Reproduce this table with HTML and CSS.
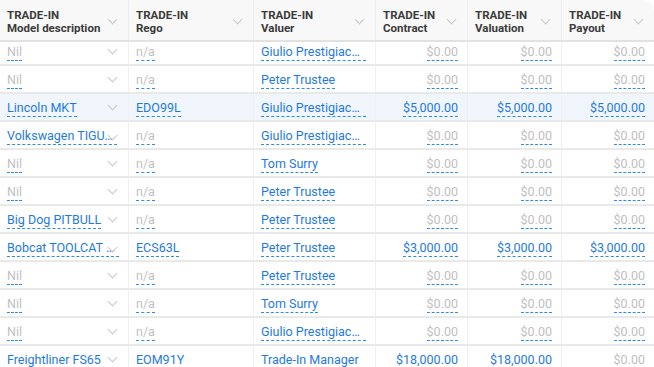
FILE: index.html
```html
<!DOCTYPE html>
<html>
<head>
<meta charset="utf-8">
<link rel="stylesheet" href="styles.css">
</head>
<body>
<div class="table">
  <div class="row head">
    <div class="th"><div class="tt"><span>TRADE-IN</span><span>Model description</span></div><i class="chev"></i></div>
    <div class="th"><div class="tt"><span>TRADE-IN</span><span>Rego</span></div><i class="chev"></i></div>
    <div class="th"><div class="tt"><span>TRADE-IN</span><span>Valuer</span></div><i class="chev"></i></div>
    <div class="th"><div class="tt"><span>TRADE-IN</span><span>Contract</span></div><i class="chev"></i></div>
    <div class="th"><div class="tt"><span>TRADE-IN</span><span>Valuation</span></div><i class="chev"></i></div>
    <div class="th"><div class="tt"><span>TRADE-IN</span><span>Payout</span></div><i class="chev"></i></div>
  </div>
  <div class="viewport">
    <div class="rows">
      <div class="row"><div class="td"><span class="l muted">Nil</span><i class="chev"></i></div><div class="td"><span class="l muted">n/a</span></div><div class="td"><span class="l trunc">Giulio Prestigiacomo</span></div><div class="td num"><span class="l muted">$0.00</span></div><div class="td num"><span class="l muted">$0.00</span></div><div class="td num"><span class="l muted">$0.00</span></div></div>
      <div class="row"><div class="td"><span class="l muted">Nil</span><i class="chev"></i></div><div class="td"><span class="l muted">n/a</span></div><div class="td"><span class="l">Peter Trustee</span></div><div class="td num"><span class="l muted">$0.00</span></div><div class="td num"><span class="l muted">$0.00</span></div><div class="td num"><span class="l muted">$0.00</span></div></div>
      <div class="row sel"><div class="td"><span class="l">Lincoln MKT</span><i class="chev"></i></div><div class="td"><span class="l">EDO99L</span></div><div class="td"><span class="l trunc">Giulio Prestigiacomo</span></div><div class="td num"><span class="l">$5,000.00</span></div><div class="td num"><span class="l">$5,000.00</span></div><div class="td num"><span class="l">$5,000.00</span></div></div>
      <div class="row"><div class="td"><span class="l trunc1">Volkswagen TIGUAN</span><i class="chev over"></i></div><div class="td"><span class="l muted">n/a</span></div><div class="td"><span class="l trunc">Giulio Prestigiacomo</span></div><div class="td num"><span class="l muted">$0.00</span></div><div class="td num"><span class="l muted">$0.00</span></div><div class="td num"><span class="l muted">$0.00</span></div></div>
      <div class="row"><div class="td"><span class="l muted">Nil</span><i class="chev"></i></div><div class="td"><span class="l muted">n/a</span></div><div class="td"><span class="l">Tom Surry</span></div><div class="td num"><span class="l muted">$0.00</span></div><div class="td num"><span class="l muted">$0.00</span></div><div class="td num"><span class="l muted">$0.00</span></div></div>
      <div class="row"><div class="td"><span class="l muted">Nil</span><i class="chev"></i></div><div class="td"><span class="l muted">n/a</span></div><div class="td"><span class="l">Peter Trustee</span></div><div class="td num"><span class="l muted">$0.00</span></div><div class="td num"><span class="l muted">$0.00</span></div><div class="td num"><span class="l muted">$0.00</span></div></div>
      <div class="row"><div class="td"><span class="l">Big Dog PITBULL</span><i class="chev"></i></div><div class="td"><span class="l muted">n/a</span></div><div class="td"><span class="l">Peter Trustee</span></div><div class="td num"><span class="l muted">$0.00</span></div><div class="td num"><span class="l muted">$0.00</span></div><div class="td num"><span class="l muted">$0.00</span></div></div>
      <div class="row"><div class="td"><span class="l trunc2"><span class="cut">Bobcat TOOLCAT 5600</span></span><i class="chev over"></i></div><div class="td"><span class="l">ECS63L</span></div><div class="td"><span class="l">Peter Trustee</span></div><div class="td num"><span class="l">$3,000.00</span></div><div class="td num"><span class="l">$3,000.00</span></div><div class="td num"><span class="l">$3,000.00</span></div></div>
      <div class="row"><div class="td"><span class="l muted">Nil</span><i class="chev"></i></div><div class="td"><span class="l muted">n/a</span></div><div class="td"><span class="l">Peter Trustee</span></div><div class="td num"><span class="l muted">$0.00</span></div><div class="td num"><span class="l muted">$0.00</span></div><div class="td num"><span class="l muted">$0.00</span></div></div>
      <div class="row"><div class="td"><span class="l muted">Nil</span><i class="chev"></i></div><div class="td"><span class="l muted">n/a</span></div><div class="td"><span class="l">Tom Surry</span></div><div class="td num"><span class="l muted">$0.00</span></div><div class="td num"><span class="l muted">$0.00</span></div><div class="td num"><span class="l muted">$0.00</span></div></div>
      <div class="row"><div class="td"><span class="l muted">Nil</span><i class="chev"></i></div><div class="td"><span class="l muted">n/a</span></div><div class="td"><span class="l trunc">Giulio Prestigiacomo</span></div><div class="td num"><span class="l muted">$0.00</span></div><div class="td num"><span class="l muted">$0.00</span></div><div class="td num"><span class="l muted">$0.00</span></div></div>
      <div class="row"><div class="td"><span class="l">Freightliner FS65</span><i class="chev"></i></div><div class="td"><span class="l">EOM91Y</span></div><div class="td"><span class="l">Trade-In Manager</span></div><div class="td num"><span class="l">$18,000.00</span></div><div class="td num"><span class="l">$18,000.00</span></div><div class="td num"><span class="l muted">$0.00</span></div></div>
    </div>
  </div>
</div>
</body>
</html>
```
FILE: styles.css
```css
html, body {
  margin: 0;
  padding: 0;
  background: #ffffff;
}
body {
  width: 654px;
  height: 367px;
  overflow: hidden;
  font-family: Roboto, "Noto Sans", Arial, sans-serif;
}
.table {
  width: 654px;
  height: 367px;
  display: flex;
  flex-direction: column;
  border-top-right-radius: 12px;
  overflow: hidden;
}
.row {
  display: grid;
  grid-template-columns: 128px 125px 122px 92px 94px 93px;
  height: 28px;
  border-bottom: 2px solid #e9e9e9;
  box-sizing: border-box;
}
.row.sel {
  background: #f1f6fd;
}
.head {
  height: 42px;
  background: #f8f8f8;
  border-bottom: 2px solid #e2e2e2;
  flex: none;
}
.th {
  display: flex;
  align-items: center;
  justify-content: space-between;
  padding: 0 9px 0 7px;
  border-left: 1px solid #ececec;
  position: relative;
}
.th:first-child, .td:first-child {
  border-left: none;
}
.tt {
  display: flex;
  flex-direction: column;
  font-size: 11.5px;
  font-weight: 700;
  color: #3b3b3b;
  line-height: 13px;
  padding-top: 3px;
}
.viewport {
  flex: 1;
  overflow: hidden;
}
.rows {
  margin-top: -4px;
}
.td {
  display: flex;
  align-items: center;
  justify-content: space-between;
  padding: 0 9px 0 7px;
  border-left: 1px solid #f0f0f0;
  font-size: 12.5px;
  min-width: 0;
  position: relative;
}
.td.num {
  justify-content: flex-end;
  padding-right: 9px;
}
.l {
  color: #1f7ae0;
  border-bottom: 1px dashed #2b8cec;
  line-height: 14px;
  padding-bottom: 1px;
  white-space: nowrap;
  margin-top: 3px;
}
.l.muted {
  color: #bfbfbf;
}
.trunc {
  display: inline-block;
  width: 112px;
  overflow: hidden;
  text-overflow: ellipsis;
}
.trunc1 {
  display: inline-block;
  width: 110px;
  overflow: hidden;
  text-overflow: ellipsis;
}
.trunc2 {
  display: inline-block;
  width: 121px;
}
.cut {
  display: inline-block;
  max-width: 109px;
  overflow: hidden;
  text-overflow: ellipsis;
  vertical-align: top;
}
.chev {
  display: block;
  width: 6px;
  height: 6px;
  border-right: 1px solid #c9c9c9;
  border-bottom: 1px solid #c9c9c9;
  transform: rotate(45deg);
  margin-top: -4px;
  margin-right: 3px;
  flex: none;
}
.th .chev {
  margin-top: -2px;
}
.chev.over {
  position: absolute;
  right: 12px;
  top: 10px;
  margin: 0;
}
```
